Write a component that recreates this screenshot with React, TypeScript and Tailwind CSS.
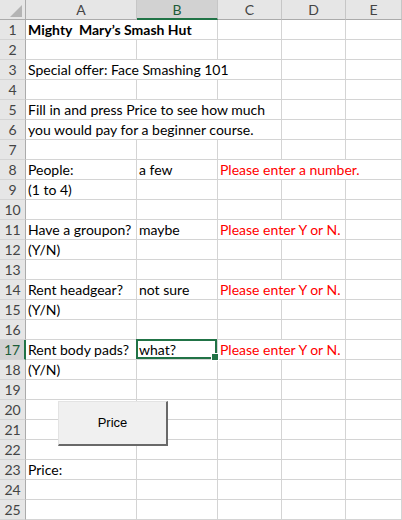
import type { ReactNode } from 'react';

type Cell = { text?: ReactNode; span?: number; red?: boolean; bold?: boolean; selected?: boolean };

const COLS = ['A', 'B', 'C', 'D', 'E'];
const SELECTED_ROW = 17;
const SELECTED_COL = 'B';

// sheet content, keyed by row number; columns are listed left to right
const sheet: Record<number, Cell[]> = {
  1: [{ text: 'Mighty  Mary\u2019s Smash Hut', span: 2, bold: true }],
  3: [{ text: 'Special offer: Face Smashing 101', span: 3 }],
  5: [{ text: 'Fill in and press Price to see how much', span: 3 }],
  6: [{ text: 'you would pay for a beginner course.', span: 3 }],
  8: [{ text: 'People:' }, { text: 'a few' }, { text: 'Please enter a number.', span: 3, red: true }],
  9: [{ text: '(1 to 4)' }],
  11: [{ text: 'Have a groupon?' }, { text: 'maybe' }, { text: 'Please enter Y or N.', span: 2, red: true }],
  12: [{ text: '(Y/N)' }],
  14: [{ text: 'Rent headgear?' }, { text: 'not sure' }, { text: 'Please enter Y or N.', span: 2, red: true }],
  15: [{ text: '(Y/N)' }],
  17: [
    { text: 'Rent body pads?' },
    { text: 'what?', selected: true },
    { text: 'Please enter Y or N.', span: 2, red: true },
  ],
  18: [{ text: '(Y/N)' }],
  23: [{ text: 'Price:' }],
};

const spanClass: Record<number, string> = { 1: '', 2: 'col-span-2', 3: 'col-span-3' };

function fillRow(cells: Cell[] = []) {
  const out: Cell[] = [...cells];
  let used = out.reduce((n, c) => n + (c.span ?? 1), 0);
  while (used < COLS.length) {
    out.push({});
    used++;
  }
  return out;
}

function DataCell({ cell }: { cell: Cell }) {
  return (
    <div
      className={`relative flex h-5 items-center whitespace-pre border-r border-b border-[#d4d4d4] pl-[2px] text-[14px] leading-[19px] ${
        spanClass[cell.span ?? 1]
      } ${cell.red ? 'text-[#ff0000]' : 'text-black'} ${cell.bold ? 'font-bold' : ''}`}
    >
      {cell.text}
      {cell.selected && (
        <div className="absolute -top-px -left-px right-0 bottom-0 z-10 border-2 border-[#217346]">
          <div className="absolute -right-[4px] -bottom-[4px] h-[6px] w-[6px] border border-white bg-[#217346] box-content" />
        </div>
      )}
    </div>
  );
}

export default function App() {
  const rows = Array.from({ length: 25 }, (_, i) => i + 1);

  return (
    <div
      className="relative h-[520px] w-[402px] overflow-hidden bg-white"
      style={{ fontFamily: 'Lato, "Open Sans", sans-serif' }}
    >
      <div className="grid grid-cols-[26px_111px_81px_64px_64px_56px]">
        {/* corner */}
        <div className="flex h-5 items-end justify-end border-r border-b border-[#ababab] bg-[#e6e6e6] pr-[3px] pb-[2px]">
          <svg width="12" height="12" viewBox="0 0 12 12">
            <polygon points="12,0 12,12 0,12" fill="#b4b4b4" />
          </svg>
        </div>
        {COLS.map((c) => (
          <div
            key={c}
            className={`flex h-5 items-center justify-center border-r border-[#c6c6c6] text-[14px] ${
              c === SELECTED_COL
                ? 'border-b-2 border-b-[#217346] bg-[#d2d2d2] text-[#1d5c38]'
                : 'border-b border-b-[#ababab] bg-[#e6e6e6] text-[#444444]'
            }`}
          >
            {c}
          </div>
        ))}

        {rows.map((r) => (
          <div key={r} className="contents">
            <div
              className={`flex h-5 items-center justify-center border-b border-[#d4d4d4] text-[14px] ${
                r === SELECTED_ROW
                  ? 'border-r-2 border-r-[#217346] bg-[#d2d2d2] text-[#1d5c38]'
                  : 'border-r border-r-[#ababab] bg-[#e6e6e6] text-[#444444]'
              }`}
            >
              {r}
            </div>
            {fillRow(sheet[r]).map((cell, i) => (
              <DataCell key={i} cell={cell} />
            ))}
          </div>
        ))}
      </div>

      {/* form button floating over the sheet */}
      <button
        className="absolute top-[401px] left-[58px] h-[45px] w-[110px] border-t border-l border-r-2 border-b-2 border-t-[#e3e3e3] border-l-[#e3e3e3] border-r-[#696969] border-b-[#696969] bg-[#f0f0f0] text-[13px] text-black"
        style={{ fontFamily: '"Liberation Sans", Arial, sans-serif' }}
      >
        Price
      </button>
    </div>
  );
}
